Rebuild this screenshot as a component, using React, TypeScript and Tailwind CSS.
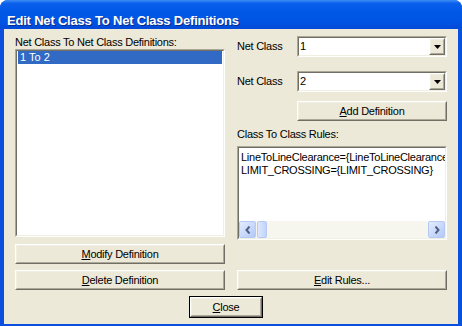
import React from "react";

const font = "font-['Liberation_Sans',Arial,sans-serif]";

function Raised({
  children,
  className = "",
}: {
  children?: React.ReactNode;
  className?: string;
}) {
  return (
    <div
      className={`border-t border-l border-t-white border-l-white border-r border-b border-r-[#716F64] border-b-[#716F64] ${className}`}
    >
      <div className="flex h-full w-full items-center justify-center border-t border-l border-t-[#F1EFE2] border-l-[#F1EFE2] border-r border-b border-r-[#ACA899] border-b-[#ACA899] bg-[#ECE9D8]">
        {children}
      </div>
    </div>
  );
}

function Button({
  label,
  accel,
  className = "",
}: {
  label: string;
  accel: string;
  className?: string;
}) {
  const rest = label.slice(accel.length);
  return (
    <Raised className={`h-[20px] ${className}`}>
      <span className="text-[11px] leading-[13px] tracking-[-0.25px] text-black">
        <span className="underline underline-offset-[1px]">{accel}</span>
        {rest}
      </span>
    </Raised>
  );
}

function Sunken({
  children,
  className = "",
}: {
  children?: React.ReactNode;
  className?: string;
}) {
  return (
    <div
      className={`border-t border-l border-t-[#ACA899] border-l-[#ACA899] border-r border-b border-r-white border-b-white ${className}`}
    >
      <div className="h-full w-full overflow-hidden border-t border-l border-t-[#716F64] border-l-[#716F64] border-r border-b border-r-[#F1EFE2] border-b-[#F1EFE2] bg-white">
        {children}
      </div>
    </div>
  );
}

function Combo({ value }: { value: string }) {
  return (
    <Sunken className="h-[21px] w-[150px]">
      <div className="flex h-full items-stretch">
        <div className="flex-1 pl-[1px] pt-[2px] text-[11px] leading-[13px] text-black">
          {value}
        </div>
        <Raised className="h-[17px] w-[16px]">
          <svg width="7" height="4" viewBox="0 0 7 4">
            <path d="M0 0h7L3.5 4z" fill="#000" />
          </svg>
        </Raised>
      </div>
    </Sunken>
  );
}

function ScrollBtn({ dir }: { dir: "left" | "right" }) {
  return (
    <div className="flex h-[17px] w-[17px] items-center justify-center rounded-[2px] border border-[#B5C9F5] bg-[linear-gradient(135deg,#E4ECFE_0%,#C6D6FB_60%,#B3C8F6_100%)]">
      <svg width="6" height="8" viewBox="0 0 6 8">
        <path
          d={dir === "left" ? "M4.5 0.5L1.5 4l3 3.5" : "M1.5 0.5L4.5 4l-3 3.5"}
          stroke="#4D6185"
          strokeWidth="2"
          fill="none"
        />
      </svg>
    </div>
  );
}

export default function App() {
  return (
    <div className={`h-[326px] w-[462px] bg-white ${font}`}>
      <div className="flex h-full w-full flex-col overflow-hidden rounded-t-[8px] bg-[#0A4FDD]">
        <div className="h-[29px] bg-[linear-gradient(to_bottom,#3D8DF5_0%,#0A5FEA_12%,#0058E8_40%,#0054E3_75%,#0349D6_100%)] pl-[7px] pt-[8px]">
          <span className="text-[13px] font-bold leading-[15px] tracking-[-0.2px] text-white [text-shadow:1px_1px_#0A2A8A]">
            Edit Net Class To Net Class Definitions
          </span>
        </div>
        <div className="mx-[4px] mb-[4px] flex flex-1 flex-col bg-[#ECE9D8] px-[11px] pb-[6px] pt-[7px] text-black">
          <div className="flex gap-[12px]">
            <div className="flex w-[210px] flex-col">
              <div className="h-[13px] text-[11px] leading-[13px] tracking-[-0.25px]">
                Net Class To Net Class Definitions:
              </div>
              <Sunken className="h-[188px] w-[210px]">
                <div className="pl-[1px] pr-[1px] pt-[0px]">
                  <div className="h-[13px] bg-[#316AC5] pl-[2px] text-[11px] leading-[13px] text-white">
                    1 To 2
                  </div>
                </div>
              </Sunken>
              <Button label="Modify Definition" accel="M" className="mt-[7px]" />
            </div>
            <div className="flex w-[210px] flex-col">
              <div className="flex items-center">
                <div className="w-[60px] text-[11px] leading-[13px] tracking-[-0.25px]">
                  Net Class
                </div>
                <Combo value="1" />
              </div>
              <div className="mt-[14px] flex items-center">
                <div className="w-[60px] text-[11px] leading-[13px] tracking-[-0.25px]">
                  Net Class
                </div>
                <Combo value="2" />
              </div>
              <Button
                label="Add Definition"
                accel="A"
                className="ml-[60px] mt-[9px] w-[150px]"
              />
              <div className="mt-[7px] h-[13px] text-[11px] leading-[13px] tracking-[-0.25px]">
                Class To Class Rules:
              </div>
              <Sunken className="mt-[5px] h-[94px] w-[210px]">
                <div className="flex h-full flex-col">
                  <div className="flex-1 whitespace-nowrap pl-[2px] pt-[3px] text-[11px] leading-[13px] tracking-[-0.25px]">
                    <div>LineToLineClearance={"{"}LineToLineClearance{"}"}</div>
                    <div>LIMIT_CROSSING={"{"}LIMIT_CROSSING{"}"}</div>
                  </div>
                  <div className="flex h-[17px] items-center bg-[#F6F5EE]">
                    <ScrollBtn dir="left" />
                    <div className="ml-[1px] h-[17px] w-[10px] rounded-[2px] border border-[#B5C9F5] bg-[linear-gradient(90deg,#DDE7FE,#C3D4FB)]" />
                    <div className="flex-1" />
                    <ScrollBtn dir="right" />
                  </div>
                </div>
              </Sunken>
            </div>
          </div>
          <div className="mt-[6px] flex gap-[12px]">
            <Button label="Delete Definition" accel="D" className="w-[210px]" />
            <Button label="Edit Rules..." accel="E" className="w-[210px]" />
          </div>
          <div className="mt-[6px] flex">
            <div className="ml-[174px] w-[74px] border border-black">
              <Button label="Close" accel="C" className="h-[18px] w-full" />
            </div>
          </div>
        </div>
      </div>
    </div>
  );
}
